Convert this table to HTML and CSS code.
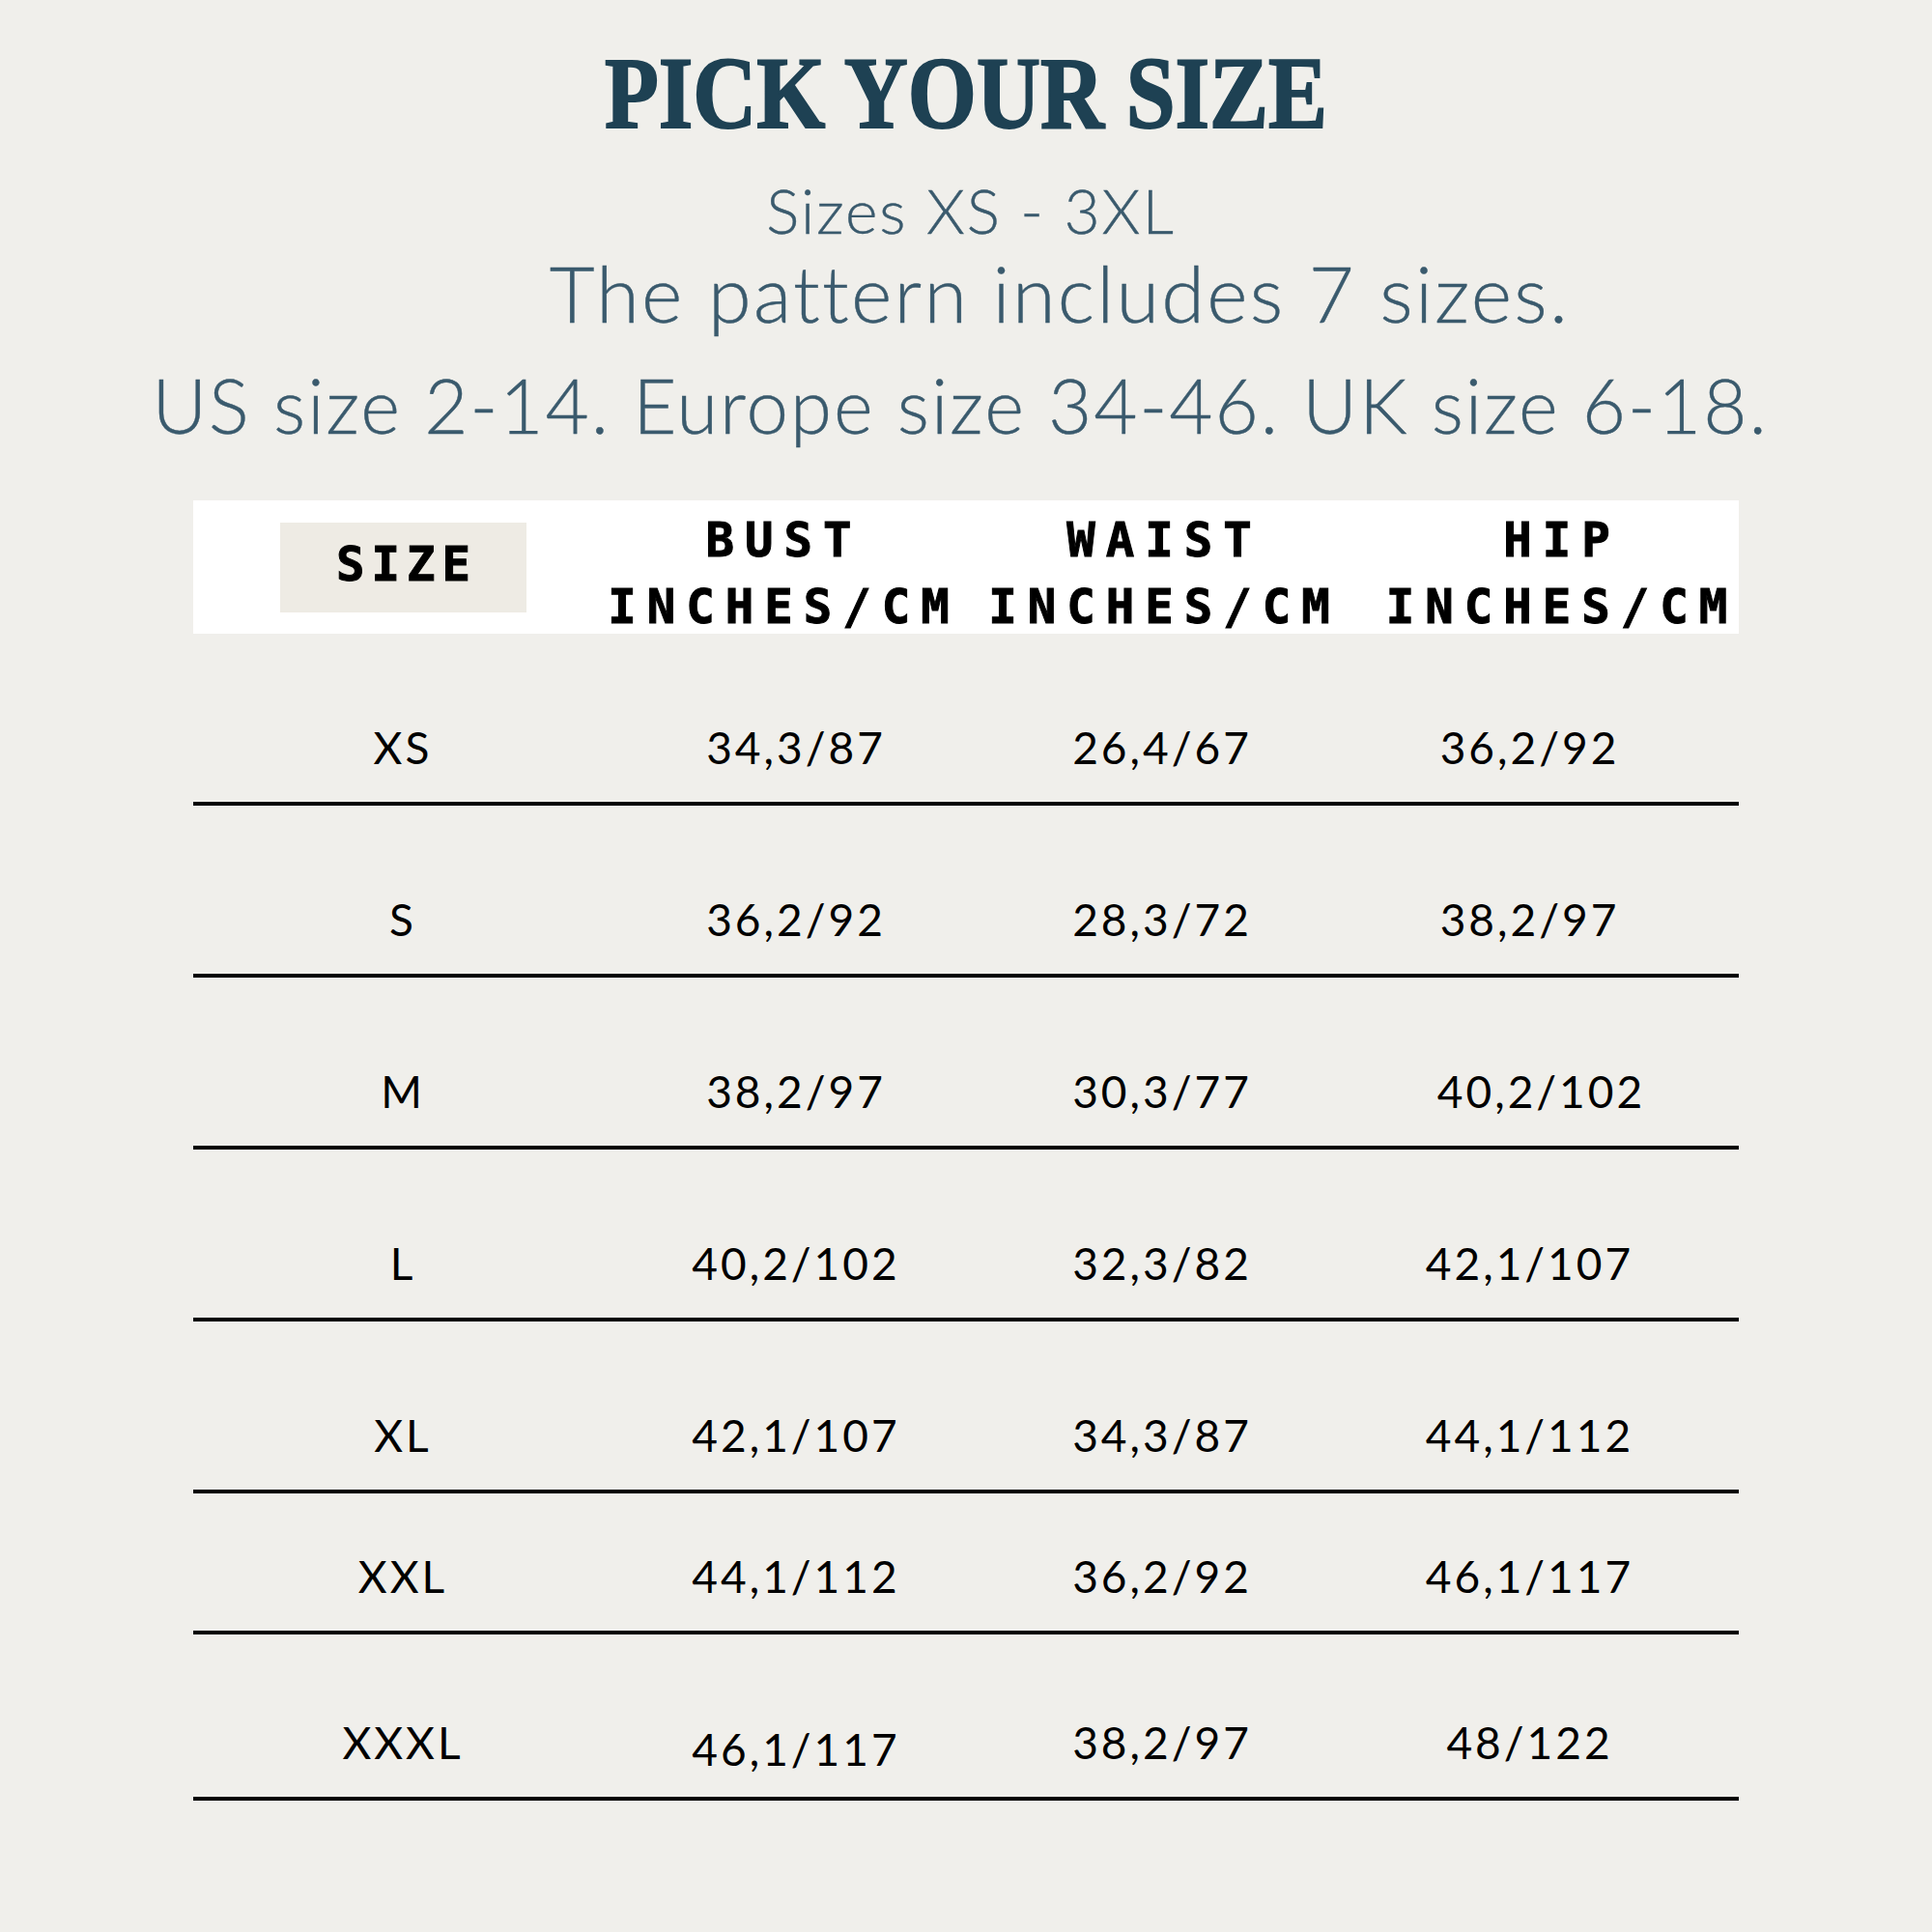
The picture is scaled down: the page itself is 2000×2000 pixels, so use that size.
FILE: index.html
```html
<!DOCTYPE html>
<html>
<head>
<meta charset="utf-8">
<link rel="stylesheet" href="styles.css">
</head>
<body>
<div class="page">
  <h1 class="title">PICK YOUR SIZE</h1>
  <p class="sub1">Sizes XS - 3XL</p>
  <p class="sub2">The pattern includes 7 sizes.</p>
  <p class="sub3">US size 2-14. Europe size 34-46. UK size 6-18.</p>

  <div class="table">
    <div class="head">
      <div class="hcell"><div class="sizebox"><span>SIZE</span></div></div>
      <div class="hcell"><span>BUST</span><span>INCHES/CM</span></div>
      <div class="hcell"><span>WAIST</span><span>INCHES/CM</span></div>
      <div class="hcell"><span>HIP</span><span>INCHES/CM</span></div>
    </div>

    <div class="row r-tall"><div class="cell">XS</div><div class="cell">34,3/87</div><div class="cell">26,4/67</div><div class="cell">36,2/92</div></div>
    <div class="row r-tall"><div class="cell">S</div><div class="cell">36,2/92</div><div class="cell">28,3/72</div><div class="cell">38,2/97</div></div>
    <div class="row r-tall"><div class="cell">M</div><div class="cell">38,2/97</div><div class="cell">30,3/77</div><div class="cell"><span class="shift">40,2/102</span></div></div>
    <div class="row r-tall"><div class="cell">L</div><div class="cell">40,2/102</div><div class="cell">32,3/82</div><div class="cell">42,1/107</div></div>
    <div class="row r-tall"><div class="cell">XL</div><div class="cell">42,1/107</div><div class="cell">34,3/87</div><div class="cell">44,1/112</div></div>
    <div class="row r-short"><div class="cell">XXL</div><div class="cell">44,1/112</div><div class="cell">36,2/92</div><div class="cell">46,1/117</div></div>
    <div class="row r-mid"><div class="cell">XXXL</div><div class="cell"><span class="low">46,1/117</span></div><div class="cell">38,2/97</div><div class="cell">48/122</div></div>
  </div>
</div>
</body>
</html>
```

FILE: styles.css
```css
html, body {
  margin: 0;
  padding: 0;
}
body {
  background: #f0efeb;
  width: 2000px;
  height: 2000px;
  overflow: hidden;
}
.page {
  padding-top: 44px;
}
.title {
  margin: 0;
  font-family: "Liberation Serif", serif;
  font-weight: 700;
  font-size: 106px;
  line-height: 106px;
  color: #1e4153;
  text-align: center;
  transform: scaleX(0.862);
  -webkit-text-stroke: 2px #1e4153;
}
.sub1, .sub2, .sub3 {
  margin: 0;
  font-family: Lato, "Open Sans", sans-serif;
  font-weight: 300;
  color: #3a5a6d;
  white-space: nowrap;
  -webkit-text-stroke: 0.4px #3a5a6d;
}
.sub1 {
  margin-top: 36px;
  font-size: 64px;
  line-height: 64px;
  text-align: center;
  padding-left: 10px;
  letter-spacing: 2px;
}
.sub2 {
  margin-top: 12px;
  font-size: 81px;
  line-height: 81px;
  text-align: center;
  padding-left: 194px;
  letter-spacing: 2.3px;
}
.sub3 {
  margin-top: 37px;
  font-size: 78px;
  line-height: 78px;
  text-align: center;
  padding-right: 12px;
  letter-spacing: 2px;
}
.table {
  margin-top: 60px;
  margin-left: 200px;
  width: 1600px;
}
.head {
  height: 138px;
  background: #ffffff;
  display: grid;
  grid-template-columns: 435px 342px 446px 377px;
  font-family: "DejaVu Sans Mono", "Liberation Mono", monospace;
  font-weight: 700;
  font-size: 49px;
  color: #000;
  -webkit-text-stroke: 1px #000;
}
.hcell {
  display: flex;
  flex-direction: column;
  align-items: center;
  padding-top: 7px;
  line-height: 69px;
  white-space: nowrap;
}
.hcell span {
  letter-spacing: 11px;
  margin-right: -11px;
}
.hcell:first-child {
  padding-top: 0;
  justify-content: center;
}
.sizebox {
  width: 255px;
  height: 93px;
  margin-bottom: 7px;
  background: #eeebe4;
  display: flex;
  align-items: center;
  justify-content: center;
  padding-bottom: 4px;
  box-sizing: border-box;
  line-height: 56px;
}
.hcell .sizebox span {
  letter-spacing: 7px;
  margin-right: -7px;
}
.row {
  display: grid;
  grid-template-columns: 434px 380px 378px 383px;
  box-sizing: border-box;
  border-bottom: 4px solid #000;
  align-items: end;
  padding-bottom: 33px;
  font-family: Lato, "Open Sans", sans-serif;
  font-weight: 400;
  font-size: 46px;
  line-height: 46px;
  color: #000;
}
.r-tall { height: 178px; }
.r-short { height: 146px; }
.r-mid { height: 172px; }
.cell {
  display: flex;
  justify-content: center;
  white-space: nowrap;
  letter-spacing: 3px;
}
.shift { margin-left: 24px; }
.low { margin-bottom: -7px; }
```
